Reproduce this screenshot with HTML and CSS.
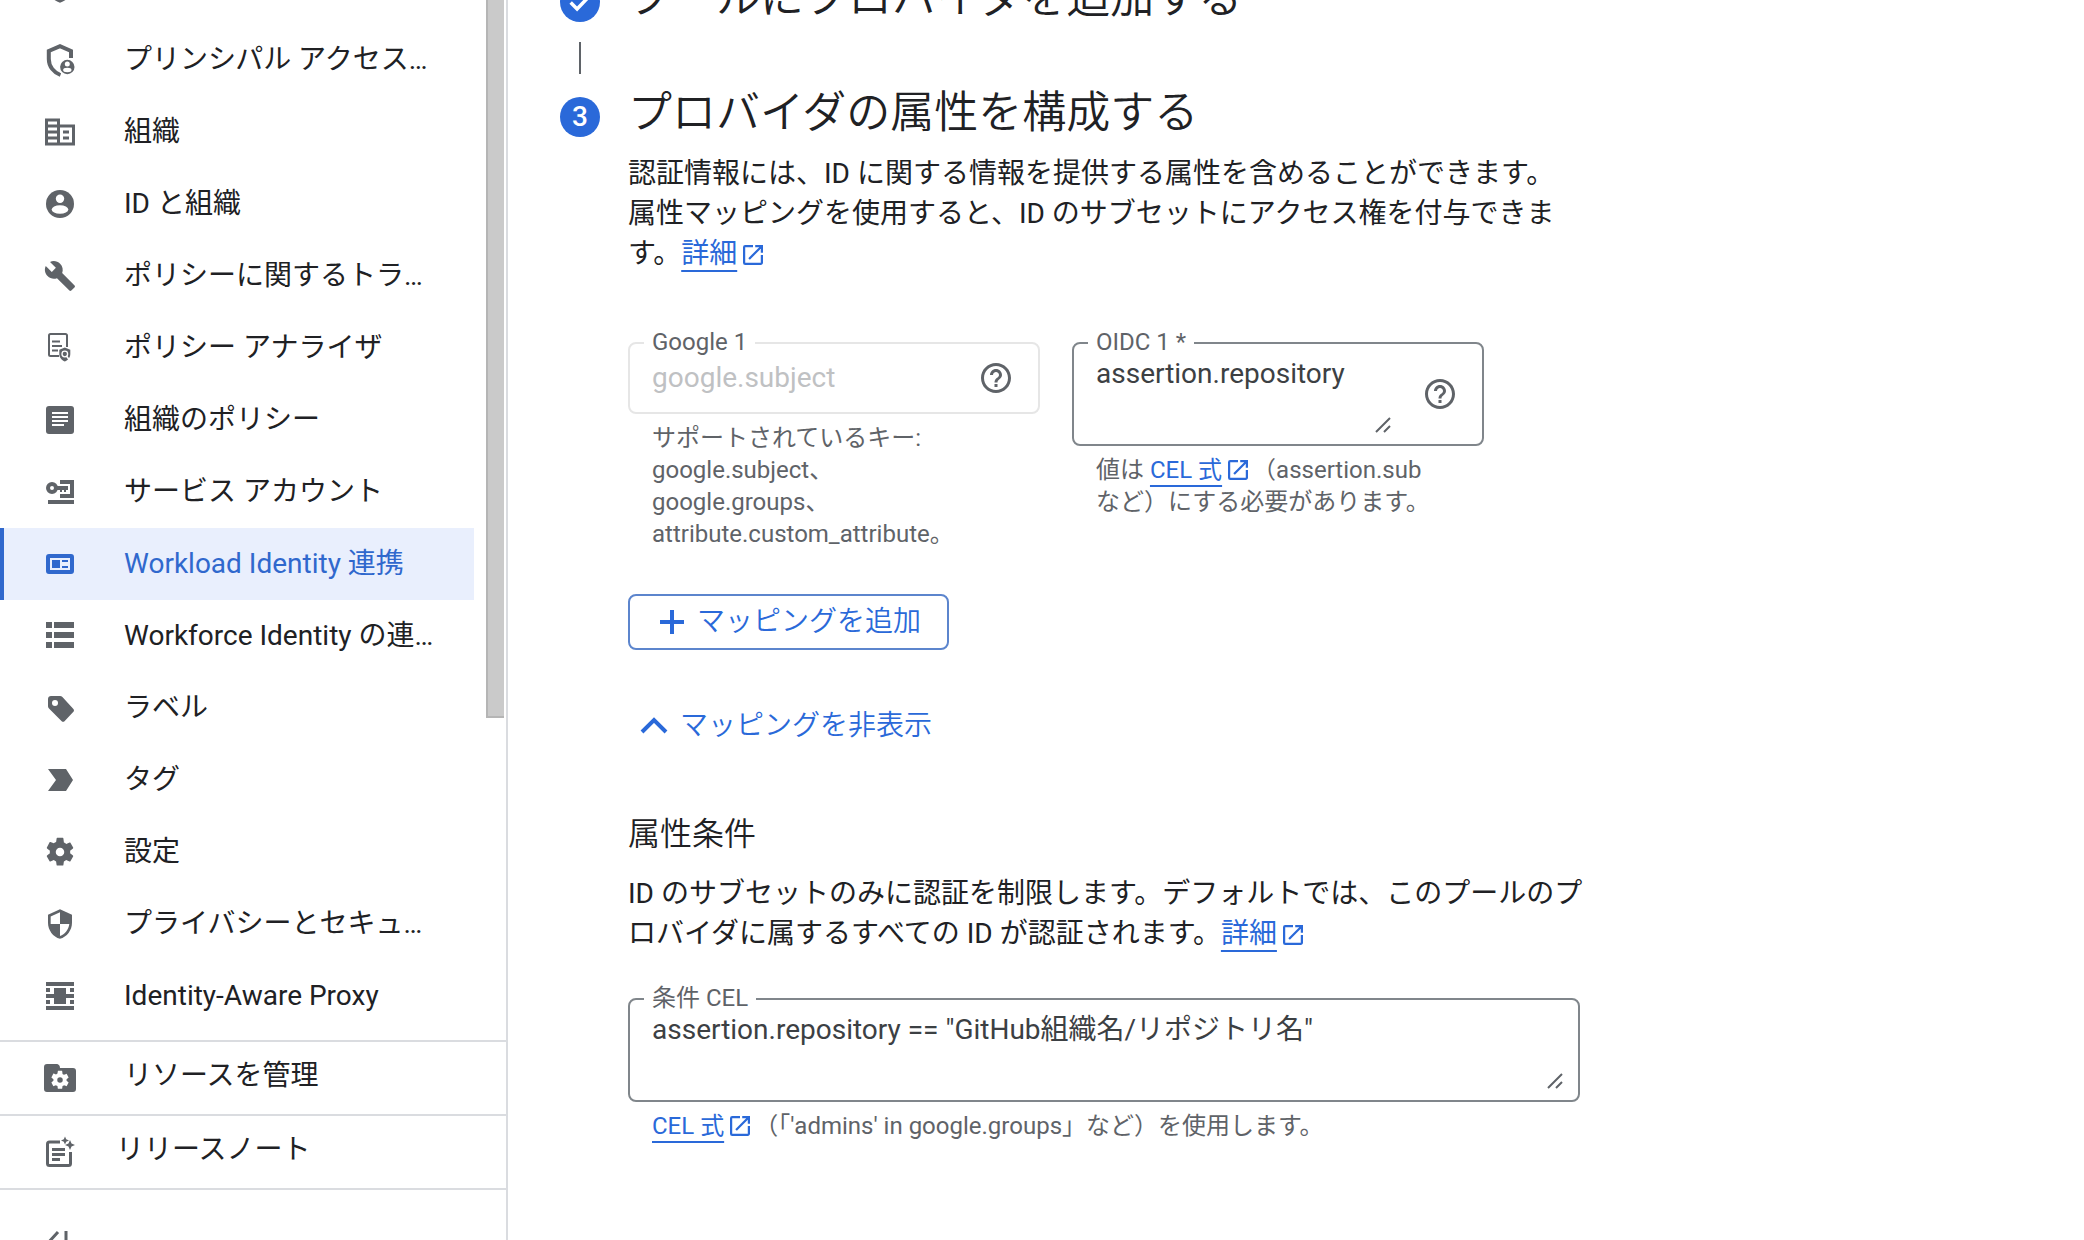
FILE: index.html
```html
<!DOCTYPE html>
<html lang="ja">
<head>
  <meta charset="UTF-8" />
  <meta name="viewport" content="width=device-width, initial-scale=1.0"/>
  <title>Workload Identity 連携</title>
  <link rel="stylesheet" href="styles.css">
</head>
<body>

  <!-- shared icons -->
  <svg class="sprite" aria-hidden="true">
    <symbol id="i-shield" viewBox="0 0 36 36">
      <path transform="translate(2 2) scale(1.333)" d="M12 1L3 5v6c0 5.55 3.84 10.74 9 12 5.16-1.26 9-6.45 9-12V5l-9-4zm0 10.99h7c-.53 4.12-3.28 7.79-7 8.94V12H5V6.3l7-3.11v8.8z"/>
    </symbol>
    <symbol id="i-gear" viewBox="0 0 24 24">
      <path d="M19.14 12.94c.04-.3.06-.61.06-.94 0-.32-.02-.64-.07-.94l2.03-1.58c.18-.14.23-.41.12-.61l-1.92-3.32c-.12-.22-.37-.29-.59-.22l-2.39.96c-.5-.38-1.03-.7-1.62-.94L14.4 2.4c-.04-.24-.24-.41-.48-.41h-3.84c-.24 0-.43.17-.47.41l-.36 2.54c-.59.24-1.13.57-1.62.94l-2.39-.96c-.22-.08-.47 0-.59.22L2.74 8.87c-.12.21-.08.47.12.61l2.03 1.58c-.05.3-.09.63-.09.94s.02.64.07.94l-2.03 1.58c-.18.14-.23.41-.12.61l1.92 3.32c.12.22.37.29.59.22l2.39-.96c.5.38 1.03.7 1.62.94l.36 2.54c.05.24.24.41.48.41h3.84c.24 0 .44-.17.47-.41l.36-2.54c.59-.24 1.13-.56 1.62-.94l2.39.96c.22.08.47 0 .59-.22l1.92-3.32c.12-.22.07-.47-.12-.61l-2.01-1.58zM12 15a3 3 0 1 1 0-6 3 3 0 0 1 0 6z"/>
    </symbol>
    <symbol id="i-help" viewBox="0 0 24 24">
      <path d="M11 18h2v-2h-2v2zm1-16C6.48 2 2 6.48 2 12s4.48 10 10 10 10-4.48 10-10S17.52 2 12 2zm0 18c-4.41 0-8-3.59-8-8s3.59-8 8-8 8 3.59 8 8-3.59 8-8 8zm0-14c-2.21 0-4 1.79-4 4h2c0-1.1.9-2 2-2s2 .9 2 2c0 2-3 1.75-3 5h2c0-2.25 3-2.5 3-5 0-2.21-1.79-4-4-4z"/>
    </symbol>
    <symbol id="i-open" viewBox="3 3 18 18">
      <path d="M19 19H5V5h7V3H5a2 2 0 0 0-2 2v14a2 2 0 0 0 2 2h14c1.1 0 2-.9 2-2v-7h-2v7zM14 3v2h3.59l-9.83 9.83 1.41 1.41L19 6.41V10h2V3h-7z"/>
    </symbol>
    <symbol id="i-grip" viewBox="0 0 16 16">
      <path d="M1 15L15 1M9 15l6-6" fill="none" stroke="currentColor" stroke-width="2"/>
    </symbol>
  </svg>

  <aside class="sidebar">
    <div class="nav-area">
      <ul class="nav-list">
        <li><a href="#"><svg class="icon"><use href="#i-shield"/></svg></a></li>
        <li><a href="#">
          <svg class="icon" viewBox="0 0 36 36">
            <path d="M29 16V9L18 4.200 6.800 9v8c0 7.500 5 13.500 11.700 16" fill="none" stroke="currentColor" stroke-width="4"/>
            <circle cx="25.300" cy="25" r="9" fill="#fff"/>
            <circle cx="25.300" cy="25" r="7.200"/>
            <circle cx="25.300" cy="22" r="2.500" fill="#fff"/>
            <ellipse cx="25.300" cy="28" rx="4.200" ry="2.200" fill="#fff"/>
          </svg>
          <span>プリンシパル アクセス境界ポリシー</span>
        </a></li>
        <li><a href="#">
          <svg class="icon" viewBox="0 0 24 24">
            <path fill-rule="evenodd" d="M2 3h10v4h10v14H2zM4 5v2h6V5zM4 9v2h6V9zM4 13v2h6v-2zM4 17v2h6v-2zM12 9v10h8V9zM14 11h4v2h-4zM14 15h4v2h-4z"/>
          </svg>
          <span>組織</span>
        </a></li>
        <li><a href="#">
          <svg class="icon" viewBox="0 0 36 36">
            <circle cx="18" cy="18" r="14"/>
            <circle cx="18" cy="12.700" r="4.200" fill="#fff"/>
            <ellipse cx="18" cy="23.500" rx="8.300" ry="4.300" fill="#fff"/>
          </svg>
          <span>ID と組織</span>
        </a></li>
        <li><a href="#">
          <svg class="icon" viewBox="0 0 36 36">
            <path transform="translate(1.600 1.600) scale(1.365)" d="M22.7 19l-9.1-9.1c.9-2.3.4-5-1.5-6.9-2-2-5-2.4-7.4-1.3L9 6 6 9 1.600 4.700C.4 7.100.9 10.100 2.900 12.100c1.900 1.900 4.600 2.400 6.900 1.500l9.100 9.100c.4.4 1 .4 1.400 0l2.300-2.300c.5-.4.5-1.100.1-1.400z"/>
          </svg>
          <span>ポリシーに関するトラブルシューティング</span>
        </a></li>
        <li><a href="#">
          <svg class="icon" viewBox="0 0 36 36">
            <path d="M17 26H8.500A1.500 1.500 0 0 1 7 24.500v-19A1.500 1.500 0 0 1 8.500 4h15A1.500 1.500 0 0 1 25 5.500V17M10 11.500h8M10 16h10M10 20.500h6" fill="none" stroke="currentColor" stroke-width="2"/>
            <path d="M22.800 17.500l-5.500 2.300v4.200c0 3.500 2.300 6.300 5.500 7.500 3.200-1.200 5.500-4 5.500-7.500v-4.200z"/>
            <path d="M24.500 26l2.500 3.500" stroke="#fff" stroke-width="1.500"/>
            <circle cx="22.800" cy="24" r="2.800" fill="none" stroke="#fff" stroke-width="1.300"/>
          </svg>
          <span>ポリシー アナライザ</span>
        </a></li>
        <li><a href="#">
          <svg class="icon" viewBox="0 0 36 36">
            <rect x="4" y="4" width="28" height="28" rx="3"/>
            <path d="M10 11h16M10 15h16M10 19h16M10 23h12" stroke="#fff" stroke-width="2"/>
          </svg>
          <span>組織のポリシー</span>
        </a></li>
        <li><a href="#">
          <svg class="icon" viewBox="0 0 36 36">
            <path d="M18 6h14v18H18v-4h10V10H18z"/>
            <path d="M6 26h26v4H6zM14 12h12v4h-2v2h-2v-2h-2v2h-2v-2h-4z"/>
            <circle cx="10" cy="14" r="4" fill="none" stroke="currentColor" stroke-width="4"/>
          </svg>
          <span>サービス アカウント</span>
        </a></li>
        <li><a href="#" class="active">
          <svg class="icon" viewBox="0 0 36 36">
            <path fill-rule="evenodd" d="M7 8h22a3 3 0 0 1 3 3v14a3 3 0 0 1-3 3H7a3 3 0 0 1-3-3V11a3 3 0 0 1 3-3zM8 12v12h20V12zM10 14h8v8h-8zM20 14h6v2h-6zM20 20h6v2h-6z"/>
          </svg>
          <span>Workload Identity 連携</span>
        </a></li>
        <li><a href="#">
          <svg class="icon" viewBox="0 0 36 36">
            <path d="M4 4h6v6H4zM12 4h20v6H12zM4 14h6v6H4zM12 14h20v6H12zM4 24h6v6H4zM12 24h20v6H12z"/>
          </svg>
          <span>Workforce Identity の連携</span>
        </a></li>
        <li><a href="#">
          <svg class="icon" viewBox="0 0 36 36">
            <path d="M9 6h9c1 0 1.800.4 2.400 1l11 12c.8.8.8 2 0 2.800l-8.900 9.400c-.8.8-2 .8-2.800 0L7 18.600c-.6-.6-1-1.400-1-2.300V9c0-1.700 1.300-3 3-3z"/>
            <circle cx="13" cy="13" r="3" fill="#fff"/>
          </svg>
          <span>ラベル</span>
        </a></li>
        <li><a href="#">
          <svg class="icon" viewBox="0 0 36 36">
            <path d="M6 7h18l7 11-7 11H6l8-11z"/>
          </svg>
          <span>タグ</span>
        </a></li>
        <li><a href="#">
          <svg class="icon" viewBox="0 0 36 36"><use href="#i-gear" x="1" y="1" width="34" height="34"/></svg>
          <span>設定</span>
        </a></li>
        <li><a href="#">
          <svg class="icon"><use href="#i-shield"/></svg>
          <span>プライバシーとセキュリティ</span>
        </a></li>
        <li><a href="#">
          <svg class="icon" viewBox="0 0 36 36">
            <path d="M4 4h28v4H4zM4 28h28v4H4zM12 10h12v16H12zM4 16h28v4H4zM4 10h4v4H4zM28 10h4v4h-4zM4 22h4v4H4zM28 22h4v4h-4z"/>
          </svg>
          <span>Identity-Aware Proxy</span>
        </a></li>
      </ul>
      <div class="scroll-thumb"></div>
    </div>

    <a href="#" class="foot-link">
      <svg class="icon" viewBox="0 0 36 36">
        <path d="M5 4h10c1 0 3 1 3 4h13a3 3 0 0 1 3 3v18a3 3 0 0 1-3 3H5a3 3 0 0 1-3-3V7a3 3 0 0 1 3-3z"/>
        <use href="#i-gear" x="7" y="9" width="22" height="22" class="knockout"/>
      </svg>
      <span>リソースを管理</span>
    </a>
    <a href="#" class="foot-link release">
      <svg class="icon" viewBox="0 0 36 36">
        <path d="M18 8H7.500A2 2 0 0 0 5.500 10v19.500a2 2 0 0 0 2 2h19a2 2 0 0 0 2-2V18" fill="none" stroke="currentColor" stroke-width="3"/>
        <path d="M10 15.500h13M10 20.500h13M10 25.500h8" stroke="currentColor" stroke-width="3"/>
        <path d="M23 2.500l1.200 2.800 2.800 1.200-2.800 1.200L23 10.500l-1.200-2.800L19 6.500l2.800-1.200zM28 6l1.500 3.500L33 11l-3.500 1.500L28 16l-1.500-3.500L23 11l3.500-1.500z"/>
      </svg>
      <span>リリースノート</span>
    </a>
    <button class="collapse">
      <svg class="icon" viewBox="0 0 36 36">
        <path d="M16 6L5 18l11 12M24 5v26" fill="none" stroke="currentColor" stroke-width="3"/>
      </svg>
    </button>
  </aside>

  <main>
    <div class="step done">
      <div class="step-mark">
        <span class="badge">
          <svg viewBox="0 0 24 24"><path d="M4 12.500l5.500 5.500L20 7" fill="none" stroke="#fff" stroke-width="3"/></svg>
        </span>
        <span class="connector"></span>
      </div>
      <h2>プールにプロバイダを追加する</h2>
    </div>

    <div class="step">
      <div class="step-mark"><span class="badge">3</span></div>
      <div class="step-body">
        <h2>プロバイダの属性を構成する</h2>
        <p>認証情報には、ID に関する情報を提供する属性を含めることができます。<br>属性マッピングを使用すると、ID のサブセットにアクセス権を付与できま<br>す。<a href="#">詳細</a><svg class="open"><use href="#i-open"/></svg></p>

        <div class="mapping">
          <div class="field-group">
            <div class="field disabled">
              <label for="google1">Google 1</label>
              <input type="text" id="google1" value="google.subject" disabled>
              <svg class="icon"><use href="#i-help"/></svg>
            </div>
            <div class="hint">サポートされているキー:<br>google.subject、<br>google.groups、<br>attribute.custom_attribute。</div>
          </div>
          <div class="field-group">
            <div class="field area">
              <label for="oidc1">OIDC 1 *</label>
              <div class="textarea-wrap">
                <textarea id="oidc1" rows="2">assertion.repository</textarea>
                <svg class="grip"><use href="#i-grip"/></svg>
              </div>
              <svg class="icon"><use href="#i-help"/></svg>
            </div>
            <div class="hint">値は <a href="#">CEL 式</a><svg class="open"><use href="#i-open"/></svg>（assertion.sub<br>など）にする必要があります。</div>
          </div>
        </div>

        <button class="add-btn">
          <svg viewBox="0 0 24 24"><path d="M12 0v24M0 12h24" stroke="currentColor" stroke-width="4"/></svg>
          マッピングを追加
        </button>
        <button class="toggle-btn">
          <svg viewBox="0 0 28 28"><path d="M2 20L14 8l12 12" fill="none" stroke="currentColor" stroke-width="4"/></svg>
          マッピングを非表示
        </button>

        <h3>属性条件</h3>
        <p>ID のサブセットのみに認証を制限します。デフォルトでは、このプールのプ<br>ロバイダに属するすべての ID が認証されます。<a href="#">詳細</a><svg class="open"><use href="#i-open"/></svg></p>

        <div class="field area wide">
          <label for="cel">条件 CEL</label>
          <div class="textarea-wrap">
            <textarea id="cel" rows="2">assertion.repository == "GitHub組織名/リポジトリ名"</textarea>
            <svg class="grip"><use href="#i-grip"/></svg>
          </div>
        </div>
        <div class="hint"><a href="#">CEL 式</a><svg class="open"><use href="#i-open"/></svg>（「'admins' in google.groups」など）を使用します。</div>
      </div>
    </div>
  </main>

</body>
</html>
```
FILE: styles.css
```css
* {
  margin: 0;
  padding: 0;
  box-sizing: border-box;
}

body {
  display: flex;
  height: 100vh;
  overflow: hidden;
  background-color: #fff;
  color: #202124;
  font-family: Roboto, "Noto Sans CJK JP", sans-serif;
  font-size: 28px;
  line-height: 40px;
}

button,
input,
textarea {
  font: inherit;
  border: none;
  background: none;
  outline: none;
}

svg {
  fill: currentColor;
  flex-shrink: 0;
}

.sprite {
  position: absolute;
  width: 0;
  height: 0;
}

.icon {
  width: 36px;
  height: 36px;
  color: #5f6368;
}

/* Sidebar */
.sidebar {
  width: 508px;
  flex-shrink: 0;
  border-right: 2px solid #dadce0;
  overflow: hidden;
}

.nav-area {
  display: flex;
  justify-content: space-between;
  padding-right: 2px;
}

.nav-list {
  width: 474px;
  margin-top: -48px;
  padding-bottom: 8px;
  list-style: none;
}

.nav-list a {
  display: flex;
  align-items: center;
  gap: 46px;
  height: 72px;
  padding: 0 36px 0 42px;
  color: #202124;
  text-decoration: none;
}

.nav-list span {
  overflow: hidden;
  text-overflow: ellipsis;
  white-space: nowrap;
}

.nav-list a.active {
  padding-left: 38px;
  border-left: 4px solid #3068cd;
  background-color: #e9effd;
  color: #3068cd;
}

.active .icon {
  color: #3068cd;
}

.scroll-thumb {
  width: 18px;
  height: 718px;
  border-left: 2px solid #b5b5b5;
  border-bottom: 2px solid #b5b5b5;
  background-color: #cacaca;
}

.foot-link {
  display: flex;
  align-items: center;
  gap: 46px;
  height: 74px;
  padding-left: 42px;
  border-top: 2px solid #dadce0;
  color: #202124;
  text-decoration: none;
}

.foot-link span {
  padding-bottom: 4px;
}

.foot-link.release {
  gap: 38px;
  height: 76px;
  border-bottom: 2px solid #dadce0;
}

.knockout {
  fill: #fff;
}

.collapse {
  display: block;
  margin: 36px 0 0 42px;
}

/* Steps */
main {
  flex: 1;
  margin-top: -28px;
  padding-left: 52px;
}

.step {
  display: flex;
  gap: 28px;
}

.step.done {
  height: 115px;
}

.step-mark {
  display: flex;
  flex-direction: column;
  align-items: center;
  width: 40px;
  padding-top: 10px;
}

.badge {
  display: flex;
  align-items: center;
  justify-content: center;
  width: 40px;
  height: 40px;
  border-radius: 50%;
  background-color: #2a69d9;
  color: #fff;
  font-size: 28px;
  font-weight: 500;
}

.badge svg {
  width: 28px;
  height: 28px;
}

.connector {
  width: 2px;
  height: 32px;
  margin-top: 20px;
  background-color: #5f6368;
}

.step-body {
  width: 952px;
}

h2 {
  font-size: 44px;
  font-weight: 350;
  line-height: 52px;
}

p {
  white-space: nowrap;
}

h2 + p {
  margin-top: 15px;
}

a {
  color: #2a69d9;
}

p a,
.hint a {
  text-decoration: underline;
  text-decoration-thickness: 2px;
  text-underline-offset: 7px;
  text-decoration-skip-ink: none;
}

.open {
  width: 20px;
  height: 20px;
  margin: 0 4px 0 6px;
  color: #2a69d9;
  vertical-align: -2px;
}

/* Form */
.mapping {
  display: flex;
  gap: 32px;
  margin: 68px 0 44px;
}

.field-group {
  width: 412px;
}

.field {
  position: relative;
  display: flex;
  align-items: center;
  height: 72px;
  padding: 0 24px 0 22px;
  border: 2px solid #80868b;
  border-radius: 8px;
}

.field label {
  position: absolute;
  top: -18px;
  left: 14px;
  padding: 0 8px;
  background-color: #fff;
  color: #5f6368;
  font-size: 24px;
  line-height: 32px;
}

.field input {
  flex: 1;
  min-width: 0;
  height: 40px;
}

.field.disabled {
  border-color: #e6e6e6;
}

.field.disabled input {
  color: #bfc1c3;
}

.field.area {
  height: 104px;
}

.field.wide {
  margin-top: 44px;
  padding-right: 12px;
}

.textarea-wrap {
  position: relative;
  flex: 1;
  min-width: 0;
  height: 80px;
}

.textarea-wrap + .icon {
  margin-left: 28px;
}

textarea {
  display: block;
  width: 100%;
  height: 80px;
  color: #3c4043;
  resize: none;
}

.grip {
  position: absolute;
  right: 3px;
  bottom: 1px;
  width: 16px;
  height: 16px;
  color: #5f6368;
}

.hint {
  padding: 8px 0 0 24px;
  color: #5f6368;
  font-size: 24px;
  line-height: 32px;
}

button {
  display: flex;
  align-items: center;
  cursor: pointer;
}

.add-btn,
.toggle-btn {
  color: #2a69d9;
  font-weight: 350;
}

.add-btn {
  gap: 13px;
  height: 56px;
  padding: 0 26px 0 30px;
  border: 2px solid #5c85cd;
  border-radius: 8px;
}

.add-btn svg {
  width: 24px;
  height: 24px;
}

.toggle-btn {
  gap: 12px;
  margin-top: 56px;
  padding-left: 12px;
}

.toggle-btn svg {
  width: 28px;
  height: 28px;
}

h3 {
  margin: 68px 0 20px;
  font-size: 32px;
  font-weight: 350;
  line-height: 40px;
}
```
